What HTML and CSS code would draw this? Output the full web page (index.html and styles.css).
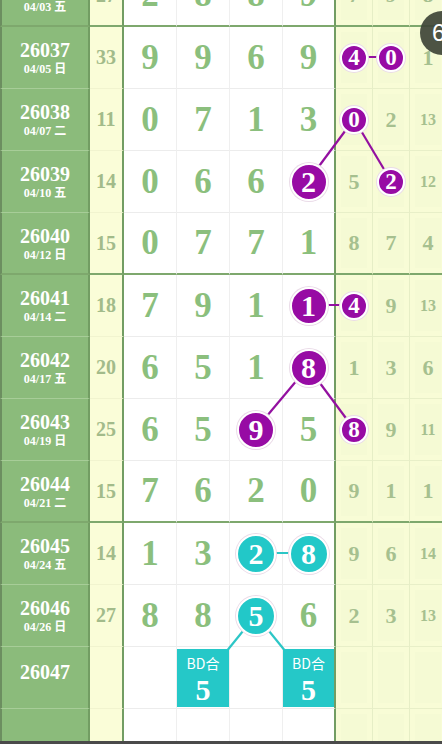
FILE: index.html
```html
<!DOCTYPE html>
<html lang="zh-CN">
<head>
    <meta charset="UTF-8">
    <title>走势图</title>
    <link rel="stylesheet" href="styles.css">
</head>
<body>
    <div class="screen">
        <div class="board">
            <div class="grid">
                <div class="row end">
                    <div class="c issue"><b>26036</b><span>04/03 五</span></div>
                    <div class="c sum">27</div>
                    <div class="c d">2</div><div class="c d">8</div><div class="c d">8</div><div class="c d last">9</div>
                    <div class="c r">7</div><div class="c r">9</div><div class="c r">8</div>
                </div>

                <div class="row">
                    <div class="c issue"><b>26037</b><span>04/05 日</span></div>
                    <div class="c sum">33</div>
                    <div class="c d">9</div><div class="c d">9</div><div class="c d">6</div><div class="c d last">9</div>
                    <div class="c r"><i class="ball sm purple">4</i></div><div class="c r"><i class="ball sm purple">0</i></div><div class="c r">1</div>
                </div>
                <div class="row">
                    <div class="c issue"><b>26038</b><span>04/07 二</span></div>
                    <div class="c sum">11</div>
                    <div class="c d">0</div><div class="c d">7</div><div class="c d">1</div><div class="c d last">3</div>
                    <div class="c r"><i class="ball sm purple">0</i></div><div class="c r">2</div><div class="c r two">13</div>
                </div>
                <div class="row">
                    <div class="c issue"><b>26039</b><span>04/10 五</span></div>
                    <div class="c sum">14</div>
                    <div class="c d">0</div><div class="c d">6</div><div class="c d">6</div><div class="c d last"><i class="ball purple">2</i></div>
                    <div class="c r">5</div><div class="c r"><i class="ball sm purple">2</i></div><div class="c r two">12</div>
                </div>
                <div class="row end">
                    <div class="c issue"><b>26040</b><span>04/12 日</span></div>
                    <div class="c sum">15</div>
                    <div class="c d">0</div><div class="c d">7</div><div class="c d">7</div><div class="c d last">1</div>
                    <div class="c r">8</div><div class="c r">7</div><div class="c r">4</div>
                </div>

                <div class="row">
                    <div class="c issue"><b>26041</b><span>04/14 二</span></div>
                    <div class="c sum">18</div>
                    <div class="c d">7</div><div class="c d">9</div><div class="c d">1</div><div class="c d last"><i class="ball purple">1</i></div>
                    <div class="c r"><i class="ball sm purple">4</i></div><div class="c r">9</div><div class="c r two">13</div>
                </div>
                <div class="row">
                    <div class="c issue"><b>26042</b><span>04/17 五</span></div>
                    <div class="c sum">20</div>
                    <div class="c d">6</div><div class="c d">5</div><div class="c d">1</div><div class="c d last"><i class="ball purple">8</i></div>
                    <div class="c r">1</div><div class="c r">3</div><div class="c r">6</div>
                </div>
                <div class="row">
                    <div class="c issue"><b>26043</b><span>04/19 日</span></div>
                    <div class="c sum">25</div>
                    <div class="c d">6</div><div class="c d">5</div><div class="c d"><i class="ball purple">9</i></div><div class="c d last">5</div>
                    <div class="c r"><i class="ball sm purple">8</i></div><div class="c r">9</div><div class="c r two">11</div>
                </div>
                <div class="row end">
                    <div class="c issue"><b>26044</b><span>04/21 二</span></div>
                    <div class="c sum">15</div>
                    <div class="c d">7</div><div class="c d">6</div><div class="c d">2</div><div class="c d last">0</div>
                    <div class="c r">9</div><div class="c r">1</div><div class="c r">1</div>
                </div>

                <div class="row">
                    <div class="c issue"><b>26045</b><span>04/24 五</span></div>
                    <div class="c sum">14</div>
                    <div class="c d">1</div><div class="c d">3</div><div class="c d"><i class="ball cyan">2</i></div><div class="c d last"><i class="ball cyan">8</i></div>
                    <div class="c r">9</div><div class="c r">6</div><div class="c r two">14</div>
                </div>
                <div class="row">
                    <div class="c issue"><b>26046</b><span>04/26 日</span></div>
                    <div class="c sum">27</div>
                    <div class="c d">8</div><div class="c d">8</div><div class="c d"><i class="ball cyan">5</i></div><div class="c d last">6</div>
                    <div class="c r">2</div><div class="c r">3</div><div class="c r two">13</div>
                </div>
                <div class="row">
                    <div class="c issue next"><b>26047</b></div>
                    <div class="c sum"></div>
                    <div class="c d"></div>
                    <div class="c d"><div class="bd"><span>BD合</span><b>5</b></div></div>
                    <div class="c d"></div>
                    <div class="c d last"><div class="bd"><span>BD合</span><b>5</b></div></div>
                    <div class="c r"></div><div class="c r"></div><div class="c r"></div>
                </div>
                <div class="row">
                    <div class="c issue"></div>
                    <div class="c sum"></div>
                    <div class="c d"></div><div class="c d"></div><div class="c d"></div><div class="c d last"></div>
                    <div class="c r"></div><div class="c r"></div><div class="c r"></div>
                </div>
            </div>

            <!-- 连线 -->
            <svg class="links" width="447" height="806" viewBox="0 -35 447 806">
                <g stroke="#9310a0" stroke-width="2.2" fill="none">
                    <line x1="354" y1="57" x2="391" y2="57"/>
                    <line x1="354" y1="119" x2="308" y2="181"/>
                    <line x1="354" y1="119" x2="391" y2="181"/>
                    <line x1="308" y1="305" x2="354" y2="305"/>
                    <line x1="308" y1="367" x2="256" y2="429"/>
                    <line x1="308" y1="367" x2="354" y2="429"/>
                </g>
                <g stroke="#2cc6c6" stroke-width="2.2" fill="none">
                    <line x1="256" y1="553" x2="308" y2="553"/>
                    <line x1="256" y1="615" x2="226" y2="652"/>
                    <line x1="256" y1="615" x2="286" y2="652"/>
                </g>
            </svg>
        </div>
        <div class="badge">6</div>
        <div class="bottom-bar"></div>
    </div>
</body>
</html>
```

FILE: styles.css
```css
body {
    margin: 0;
    font-family: "Liberation Serif", "Noto Sans CJK SC", serif;
}
.screen {
    position: relative;
    width: 442px;
    height: 744px;
    overflow: hidden;
    display: flex;
    flex-direction: column;
    background-color: #fff;
}
.board {
    position: relative;
    flex: 1;
    margin-top: -35px;
    overflow: hidden;
}
.row {
    display: grid;
    grid-template-columns: 90px 34px 53px 53px 53px 53px 37px 37px 37px;
    height: 62px;
}
.c {
    box-sizing: border-box;
    display: flex;
    align-items: center;
    justify-content: center;
    font-weight: bold;
    border-bottom: 1px solid #ececec;
    border-right: 1px solid #efefef;
}
.row.end .c {
    border-bottom: 2px solid #7ea86d;
}
.issue {
    flex-direction: column;
    color: #fff;
    background-color: #8bbb7b;
    border-left: 2px solid #6c8e60;
    border-right: 2px solid #729d63;
    border-bottom-color: #a7cd98;
    padding-top: 2px;
}
.issue.next {
    padding: 0 0 12px;
}
.issue b {
    font-size: 20px;
    line-height: 20px;
}
.issue span {
    font-size: 12px;
    line-height: 16px;
    margin-top: 1px;
}
.sum {
    font-size: 20px;
    color: #a2bb8a;
    background-color: #fafdd8;
    border-right: 2px solid #729d63;
    border-bottom-color: #f1f4cf;
}
.d {
    font-size: 35px;
    color: #8bbf7d;
    background-color: #fff;
}
.d.last {
    border-right: 2px solid #729d63;
}
.r {
    font-size: 22px;
    color: #a6c08f;
    background-color: #f5fad4;
    border-right-color: #e6eec6;
    border-bottom-color: #e8efc8;
    box-shadow: inset 0 0 0 5px #f8fcd6;
}
.r.two {
    font-size: 16px;
}
.ball {
    position: relative;
    z-index: 2;
    box-sizing: border-box;
    display: flex;
    align-items: center;
    justify-content: center;
    width: 38px;
    height: 38px;
    border-radius: 50%;
    border: 2px solid #fff;
    box-shadow: 0 0 0 1px #eadbe8;
    font-style: normal;
    font-size: 30px;
    color: #fff;
}
.ball.sm {
    width: 28px;
    height: 28px;
    font-size: 23px;
}
.purple {
    background-color: #970ba4;
}
.cyan {
    background-color: #22c8c8;
    width: 40px;
    height: 40px;
}
.bd {
    position: relative;
    z-index: 2;
    box-sizing: border-box;
    align-self: stretch;
    flex: 1;
    margin: 2px 0 1px;
    display: flex;
    flex-direction: column;
    align-items: center;
    background-color: #25c8c8;
    color: #fff;
}
.bd span {
    font-family: "Noto Sans CJK SC", sans-serif;
    font-weight: normal;
    font-size: 14px;
    line-height: 20px;
    margin-top: 4px;
}
.bd b {
    font-size: 30px;
    line-height: 30px;
    margin-top: 2px;
}
.links {
    position: absolute;
    top: 0;
    left: 0;
    z-index: 1;
}
.badge {
    position: absolute;
    top: 11px;
    left: 420px;
    width: 44px;
    height: 44px;
    box-sizing: border-box;
    padding-left: 12px;
    border-radius: 50%;
    background-color: rgba(62, 68, 55, 0.92);
    color: #fff;
    font-family: "Liberation Sans", sans-serif;
    font-size: 24px;
    line-height: 44px;
    z-index: 5;
}
.bottom-bar {
    height: 3px;
    background-color: #4a4a4a;
}
```
